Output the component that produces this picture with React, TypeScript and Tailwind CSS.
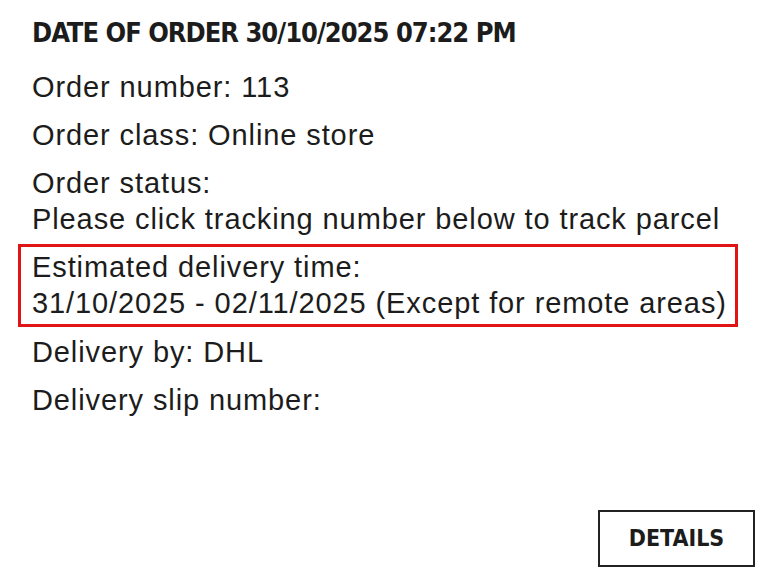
const rows: string[][] = [
    ['Order number: 113'],
    ['Order class: Online store'],
    ['Order status:', 'Please click tracking number below to track parcel'],
];

const after: string[][] = [['Delivery by: DHL'], ['Delivery slip number:']];

function Row({ lines }: { lines: string[] }) {
    return (
        <div>
            {lines.map((l) => (
                <p key={l}>{l}</p>
            ))}
        </div>
    );
}

export default function App() {
    return (
        <div className="h-[576px] w-[761px] bg-white text-[#1c1c1c]">
            <div className="flex flex-col px-8 pt-[17px]">
                <h1 className="font-['DejaVu_Sans_Condensed','Liberation_Sans',sans-serif] text-[27px] font-bold leading-[32px] tracking-[-1px]">
                    DATE OF ORDER 30/10/2025 07:22 PM
                </h1>
                <div className="mt-[20px] flex flex-col gap-3 whitespace-nowrap font-['Liberation_Sans',sans-serif] text-[29px] leading-[36px] tracking-[0.9px]">
                    {rows.map((r) => (
                        <Row key={r[0]} lines={r} />
                    ))}
                    <div className="-my-[5px] -ml-[14px] -mr-[9px] border-[3px] border-[#e01414] px-[11px] pb-[3px] pt-[2px]">
                        <p>Estimated delivery time:</p>
                        <p>31/10/2025 - 02/11/2025 (Except for remote areas)</p>
                    </div>
                    {after.map((r) => (
                        <Row key={r[0]} lines={r} />
                    ))}
                </div>
            </div>
            <div className="mt-[92px] flex justify-end pr-[6px]">
                <button className="flex h-[57px] w-[157px] items-center justify-center border-2 border-[#222] font-['DejaVu_Sans_Condensed','Liberation_Sans',sans-serif] text-[23px] font-bold">
                    DETAILS
                </button>
            </div>
        </div>
    );
}
